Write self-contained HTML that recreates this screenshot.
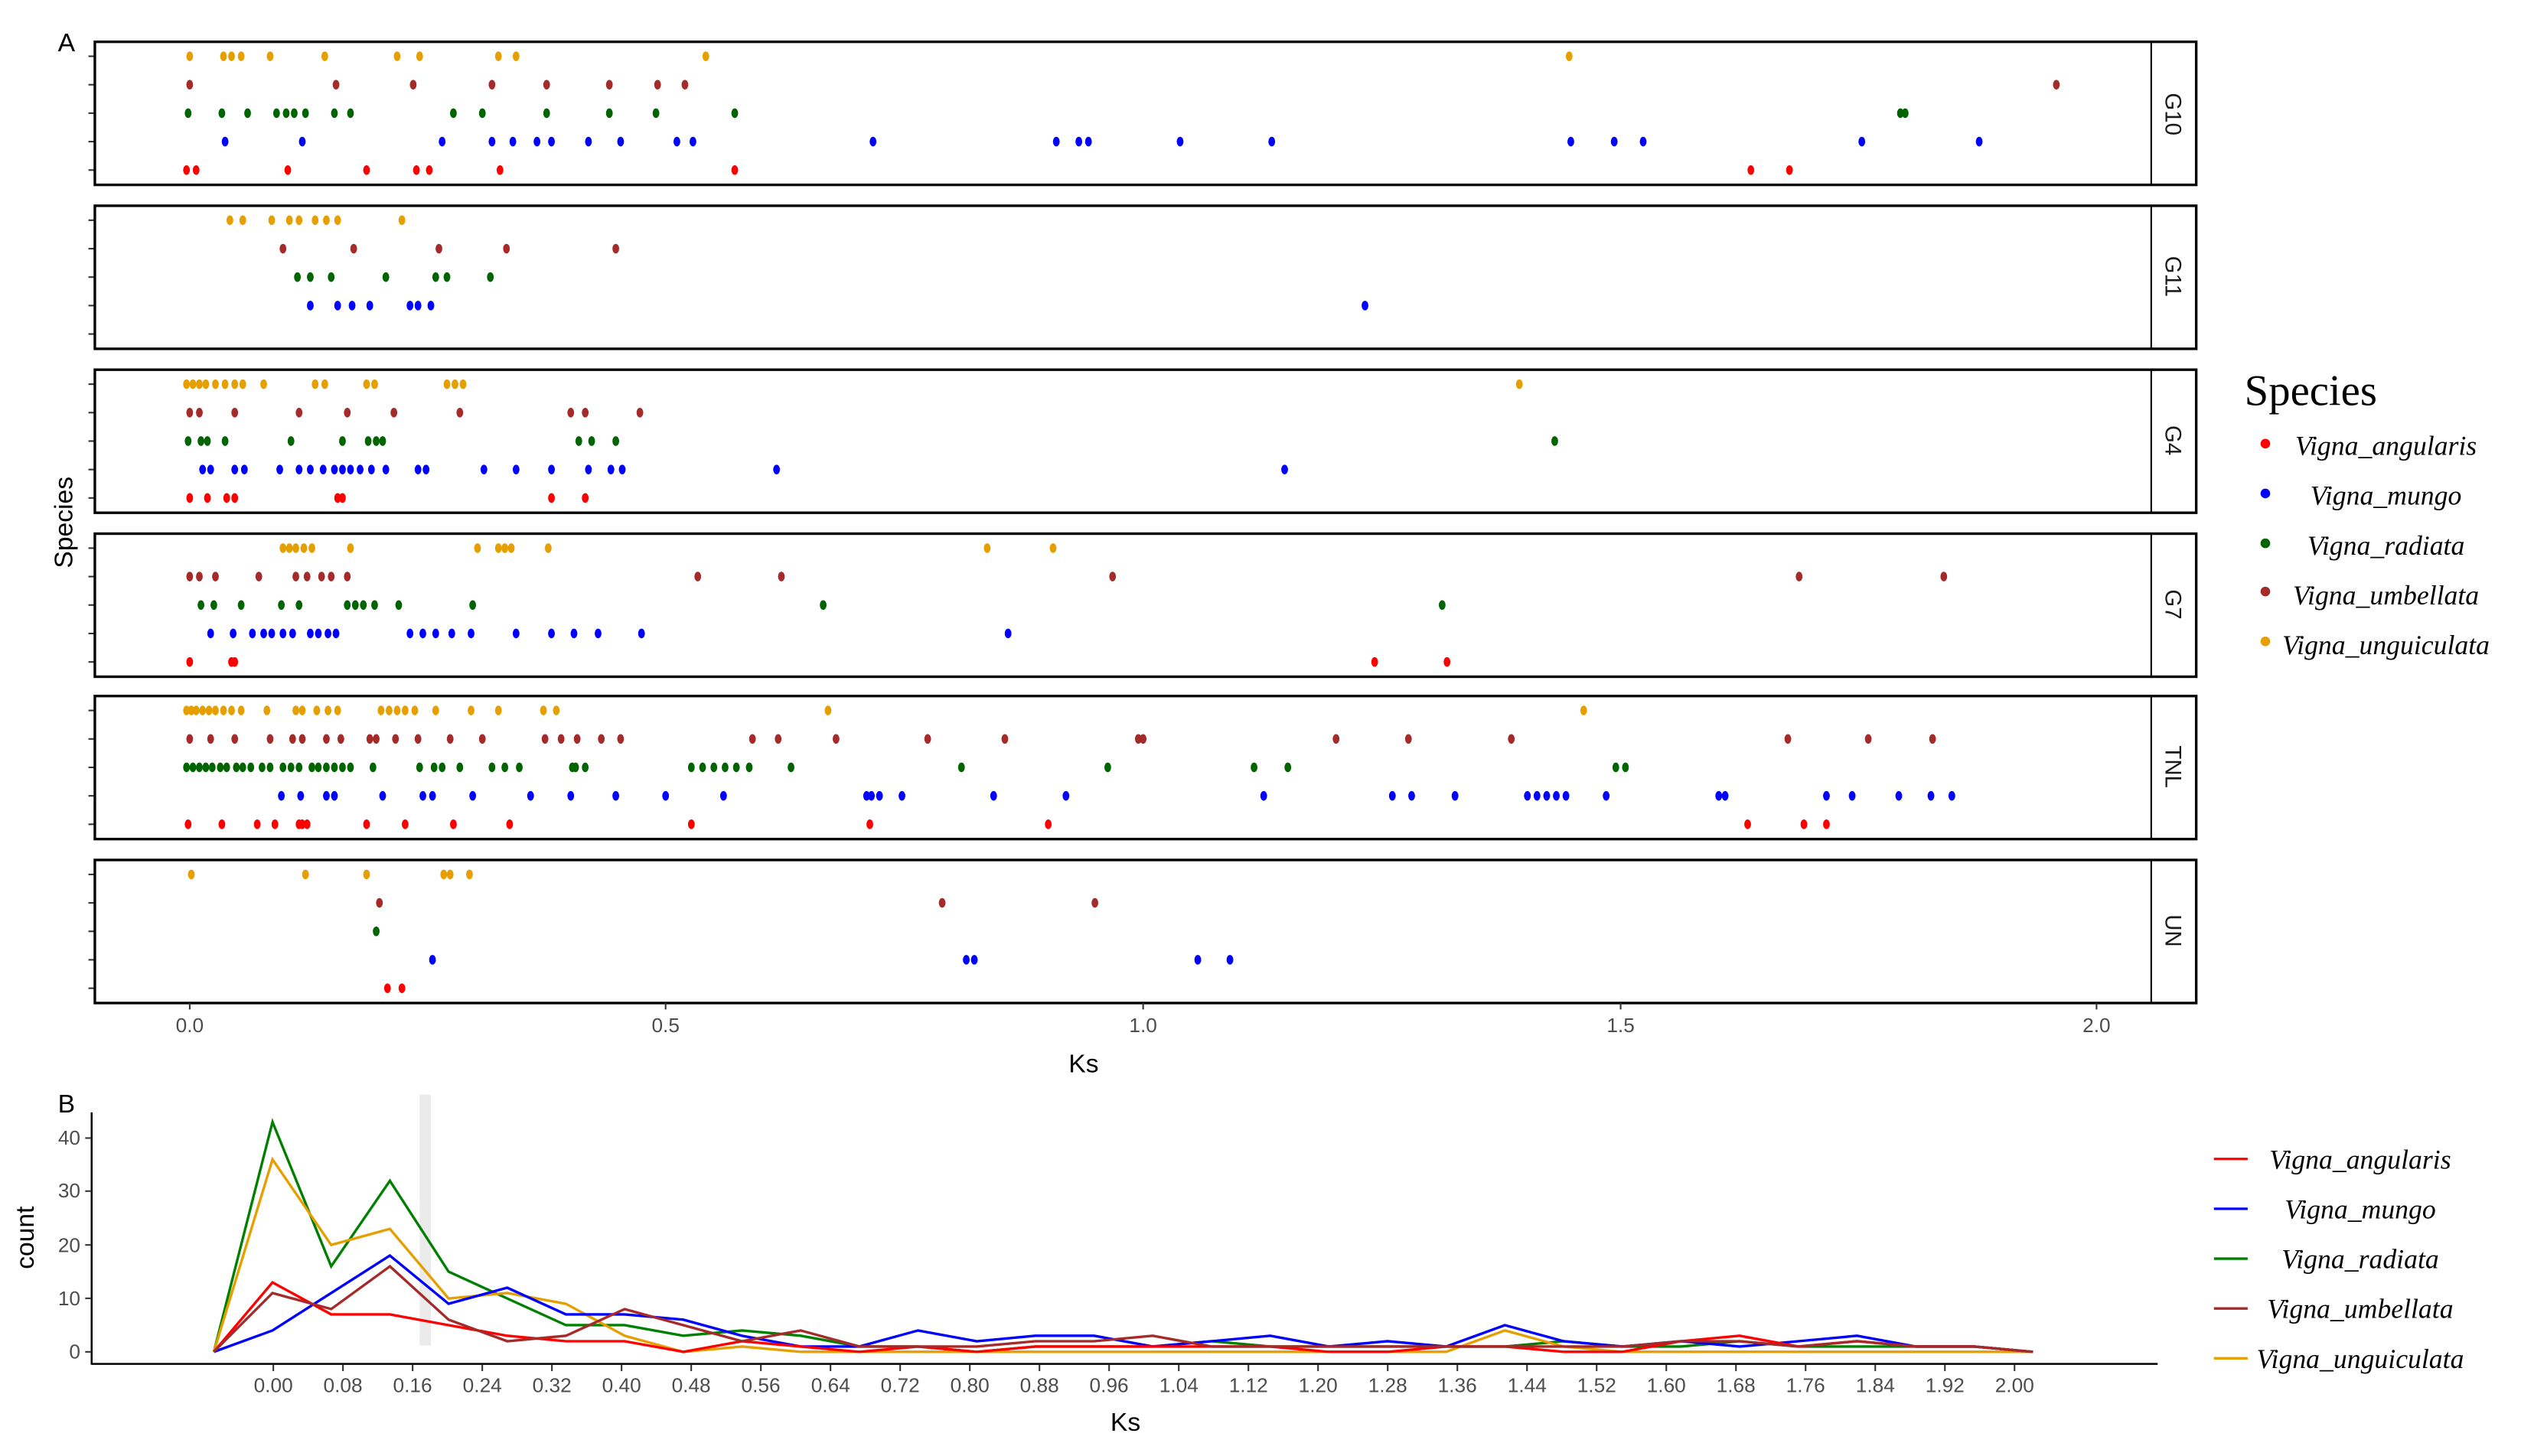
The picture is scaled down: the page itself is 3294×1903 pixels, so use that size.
<!DOCTYPE html>
<html><head><meta charset="utf-8"><style>
html,body{margin:0;padding:0;background:#fff;overflow:hidden}
svg{display:block}
.ax{font-family:"Liberation Sans",sans-serif;font-size:12.5px;fill:#4d4d4d}
.lab{font-family:"Liberation Sans",sans-serif;font-size:16px;fill:#000}
.leg{font-family:"Liberation Serif",serif;font-style:italic;font-size:17px;fill:#000}
.strip{font-family:"Liberation Sans",sans-serif;font-size:14px;fill:#1a1a1a}
</style></head><body>
<svg id="s" xmlns="http://www.w3.org/2000/svg" width="3294" height="1903" viewBox="0 0 1568 905.8" preserveAspectRatio="none">
<rect width="1570" height="910" fill="#fff"/>
<g id="dots"></g>
<g id="frames" fill="none" stroke="#000"></g>
<text class="lab" x="36" y="32" font-size="18">A</text>
<text class="lab" x="36" y="692" font-size="18">B</text>
<text class="strip" transform="translate(1347,71) rotate(90)" text-anchor="middle">G10</text>
<text class="strip" transform="translate(1347,172) rotate(90)" text-anchor="middle">G11</text>
<text class="strip" transform="translate(1347,274) rotate(90)" text-anchor="middle">G4</text>
<text class="strip" transform="translate(1347,376) rotate(90)" text-anchor="middle">G7</text>
<text class="strip" transform="translate(1347,477) rotate(90)" text-anchor="middle">TNL</text>
<text class="strip" transform="translate(1347,579) rotate(90)" text-anchor="middle">UN</text>
<g stroke="#333" stroke-width="1"><line x1="118" y1="624" x2="118" y2="628"/><line x1="414" y1="624" x2="414" y2="628"/><line x1="711" y1="624" x2="711" y2="628"/><line x1="1008" y1="624" x2="1008" y2="628"/><line x1="1304" y1="624" x2="1304" y2="628"/></g>
<text class="ax" x="118" y="642" text-anchor="middle">0.0</text>
<text class="ax" x="414" y="642" text-anchor="middle">0.5</text>
<text class="ax" x="711" y="642" text-anchor="middle">1.0</text>
<text class="ax" x="1008" y="642" text-anchor="middle">1.5</text>
<text class="ax" x="1304" y="642" text-anchor="middle">2.0</text>
<text class="lab" x="674" y="667" text-anchor="middle">Ks</text>
<text class="lab" transform="translate(45,325) rotate(-90)" text-anchor="middle">Species</text>
<text x="1396" y="252" font-family="Liberation Serif,serif" font-size="27">Species</text>
<circle cx="1409" cy="276" r="3" fill="#ff0000"/><circle cx="1409" cy="307" r="3" fill="#0000ff"/><circle cx="1409" cy="338" r="3" fill="#006400"/><circle cx="1409" cy="368" r="3" fill="#a52a2a"/><circle cx="1409" cy="399" r="3" fill="#e69f00"/>
<text class="leg" x="1484" y="283" text-anchor="middle">Vigna_angularis</text>
<text class="leg" x="1484" y="314" text-anchor="middle">Vigna_mungo</text>
<text class="leg" x="1484" y="345" text-anchor="middle">Vigna_radiata</text>
<text class="leg" x="1484" y="376" text-anchor="middle">Vigna_umbellata</text>
<text class="leg" x="1484" y="407" text-anchor="middle">Vigna_unguiculata</text>
<rect x="261" y="681" width="7" height="156" fill="#ebebeb"/>
<g id="lines" fill="none" stroke-width="1.6"></g>
<line x1="57" y1="692" x2="57" y2="849" stroke="#000" stroke-width="1.2"/>
<line x1="57" y1="848.5" x2="1342" y2="848.5" stroke="#000" stroke-width="1.2"/>
<g stroke="#333"><line x1="53" y1="708" x2="57" y2="708"/><line x1="53" y1="774.5" x2="57" y2="774.5"/><line x1="53" y1="807.7" x2="57" y2="807.7"/><line x1="53" y1="741" x2="57" y2="741"/><line x1="53" y1="841" x2="57" y2="841"/></g>
<text class="ax" x="50" y="712" text-anchor="end">40</text>
<text class="ax" x="50" y="745" text-anchor="end">30</text>
<text class="ax" x="50" y="779" text-anchor="end">20</text>
<text class="ax" x="50" y="812" text-anchor="end">10</text>
<text class="ax" x="50" y="845" text-anchor="end">0</text>
<text class="lab" transform="translate(21,770) rotate(-90)" text-anchor="middle">count</text>
<g id="bticks" stroke="#333"></g>
<g class="ax" text-anchor="middle">
<text x="170" y="866">0.00</text><text x="213.3" y="866">0.08</text><text x="256.6" y="866">0.16</text><text x="300" y="866">0.24</text><text x="343.3" y="866">0.32</text><text x="386.6" y="866">0.40</text><text x="429.9" y="866">0.48</text><text x="473.2" y="866">0.56</text><text x="516.6" y="866">0.64</text><text x="559.9" y="866">0.72</text><text x="603.2" y="866">0.80</text><text x="646.5" y="866">0.88</text><text x="689.8" y="866">0.96</text><text x="733.2" y="866">1.04</text><text x="776.5" y="866">1.12</text><text x="819.8" y="866">1.20</text><text x="863.1" y="866">1.28</text><text x="906.4" y="866">1.36</text><text x="949.8" y="866">1.44</text><text x="993.1" y="866">1.52</text><text x="1036.4" y="866">1.60</text><text x="1079.7" y="866">1.68</text><text x="1123" y="866">1.76</text><text x="1166.4" y="866">1.84</text><text x="1209.7" y="866">1.92</text><text x="1253" y="866">2.00</text>
</g>
<text class="lab" x="700" y="890" text-anchor="middle">Ks</text>
<g stroke-width="1.6"><line x1="1377" y1="721" x2="1398" y2="721" stroke="#ff0000"/><line x1="1377" y1="752" x2="1398" y2="752" stroke="#0000ff"/><line x1="1377" y1="783" x2="1398" y2="783" stroke="#008000"/><line x1="1377" y1="814" x2="1398" y2="814" stroke="#a52a2a"/><line x1="1377" y1="845" x2="1398" y2="845" stroke="#e69f00"/></g>
<text class="leg" x="1468" y="727" text-anchor="middle">Vigna_angularis</text>
<text class="leg" x="1468" y="758" text-anchor="middle">Vigna_mungo</text>
<text class="leg" x="1468" y="789" text-anchor="middle">Vigna_radiata</text>
<text class="leg" x="1468" y="820" text-anchor="middle">Vigna_umbellata</text>
<text class="leg" x="1468" y="851" text-anchor="middle">Vigna_unguiculata</text>
</svg>
<script>
var NS="http://www.w3.org/2000/svg";
function el(t,a,p){var e=document.createElementNS(NS,t);for(var k in a)e.setAttribute(k,a[k]);p.appendChild(e);return e;}
var C=["#e69f00","#a52a2a","#006400","#0000ff","#ff0000"];
var tops=[26,128,230,332,433,535];
var D=[
[[118,139,144,150,168,202,247,261,310,321,439,976],[118,209,257,306,340,379,409,426,1279],[117,138,154,172,178,183,190,208,218,282,300,340,379,408,457,1182,1185],[140,188,275,306,319,334,343,366,386,421,431,543,657,671,677,734,791,977,1004,1022,1158,1231],[116,122,179,228,259,267,311,457,1089,1113]],
[[143,151,169,180,186,196,203,210,250],[176,220,273,315,383],[185,193,206,240,271,278,305],[193,210,219,230,255,260,268,849],[]],
[[116,120,124,128,134,140,146,151,164,196,202,228,233,278,283,288,945],[118,124,146,186,216,245,286,355,364,398],[117,125,129,140,181,213,229,234,238,360,368,383,967],[126,131,146,152,174,186,193,201,208,213,218,224,231,240,260,265,301,321,343,366,380,387,483,799],[118,129,141,146,210,213,343,364]],
[[176,180,184,189,194,218,297,310,314,318,341,614,655],[118,124,134,161,184,191,200,206,216,434,486,692,1119,1209],[125,133,150,175,186,216,221,226,233,248,294,512,897],[131,145,157,164,169,176,182,193,198,204,209,255,263,271,281,293,321,343,357,372,399,627],[118,144,146,855,900]],
[[116,119,122,126,130,134,139,144,150,166,184,188,197,204,210,237,242,247,252,258,271,293,310,338,346,515,985],[118,131,146,168,182,188,203,212,230,234,246,260,280,300,339,349,359,374,386,468,484,520,577,625,708,711,831,876,940,1112,1162,1202],[116,120,124,128,132,137,141,147,151,156,163,168,176,181,186,194,198,203,208,213,218,232,261,270,275,286,306,314,323,356,358,364,430,437,444,451,458,466,492,598,689,780,801,1005,1011],[175,187,203,208,238,263,269,294,330,355,383,414,450,539,542,547,561,618,663,786,866,878,905,950,956,962,968,974,999,1069,1073,1136,1152,1181,1201,1214],[117,138,160,171,186,188,191,228,252,282,317,430,541,652,1087,1122,1136]],
[[119,190,228,276,280,292],[236,586,681],[234],[269,601,606,745,765],[241,250]]];
var dg=document.getElementById("dots"),fg=document.getElementById("frames");
for(var p=0;p<6;p++){var t=tops[p];
 for(var r=0;r<5;r++){var y=t+9+r*17.7;
  el("line",{x1:55,y1:y,x2:59,y2:y,stroke:"#333","stroke-width":1},dg);
  D[p][r].forEach(function(x){el("ellipse",{cx:x,cy:y,rx:2.1,ry:3,fill:C[r]},dg);});}
 el("rect",{x:59,y:t,width:1307,height:89,"stroke-width":1.6},fg);
 el("line",{x1:1338,y1:t,x2:1338,y2:t+89,"stroke-width":1},fg);
}
var bt=document.getElementById("bticks");
for(var k=0;k<26;k++){var x=170+43.32*k;el("line",{x1:x,y1:849,x2:x,y2:853},bt);}
var L=[
["#008000",[0,43,16,32,15,10,5,5,3,4,3,1,1,0,1,1,1,2,1,1,1,1,1,2,1,1,2,1,1,1,1,0]],
["#e69f00",[0,36,20,23,10,11,9,3,0,1,0,0,0,0,0,0,0,0,0,0,0,0,4,1,0,0,0,0,0,0,0,0]],
["#0000ff",[0,4,11,18,9,12,7,7,6,3,1,1,4,2,3,3,1,2,3,1,2,1,5,2,1,2,1,2,3,1,1,0]],
["#ff0000",[0,13,7,7,5,3,2,2,0,2,1,0,1,0,1,1,1,1,1,0,0,1,1,0,0,2,3,1,2,1,1,0]],
["#a52a2a",[0,11,8,16,6,2,3,8,5,2,4,1,1,1,2,2,3,1,1,1,1,1,1,1,1,2,2,1,2,1,1,0]]];
var lg=document.getElementById("lines");
L.forEach(function(s){var pts=s[1].map(function(v,i){return (133+36.5*i).toFixed(1)+","+(841-3.325*v).toFixed(1);}).join(" ");
 el("polyline",{points:pts,stroke:s[0]},lg);});
</script>
</body></html>
